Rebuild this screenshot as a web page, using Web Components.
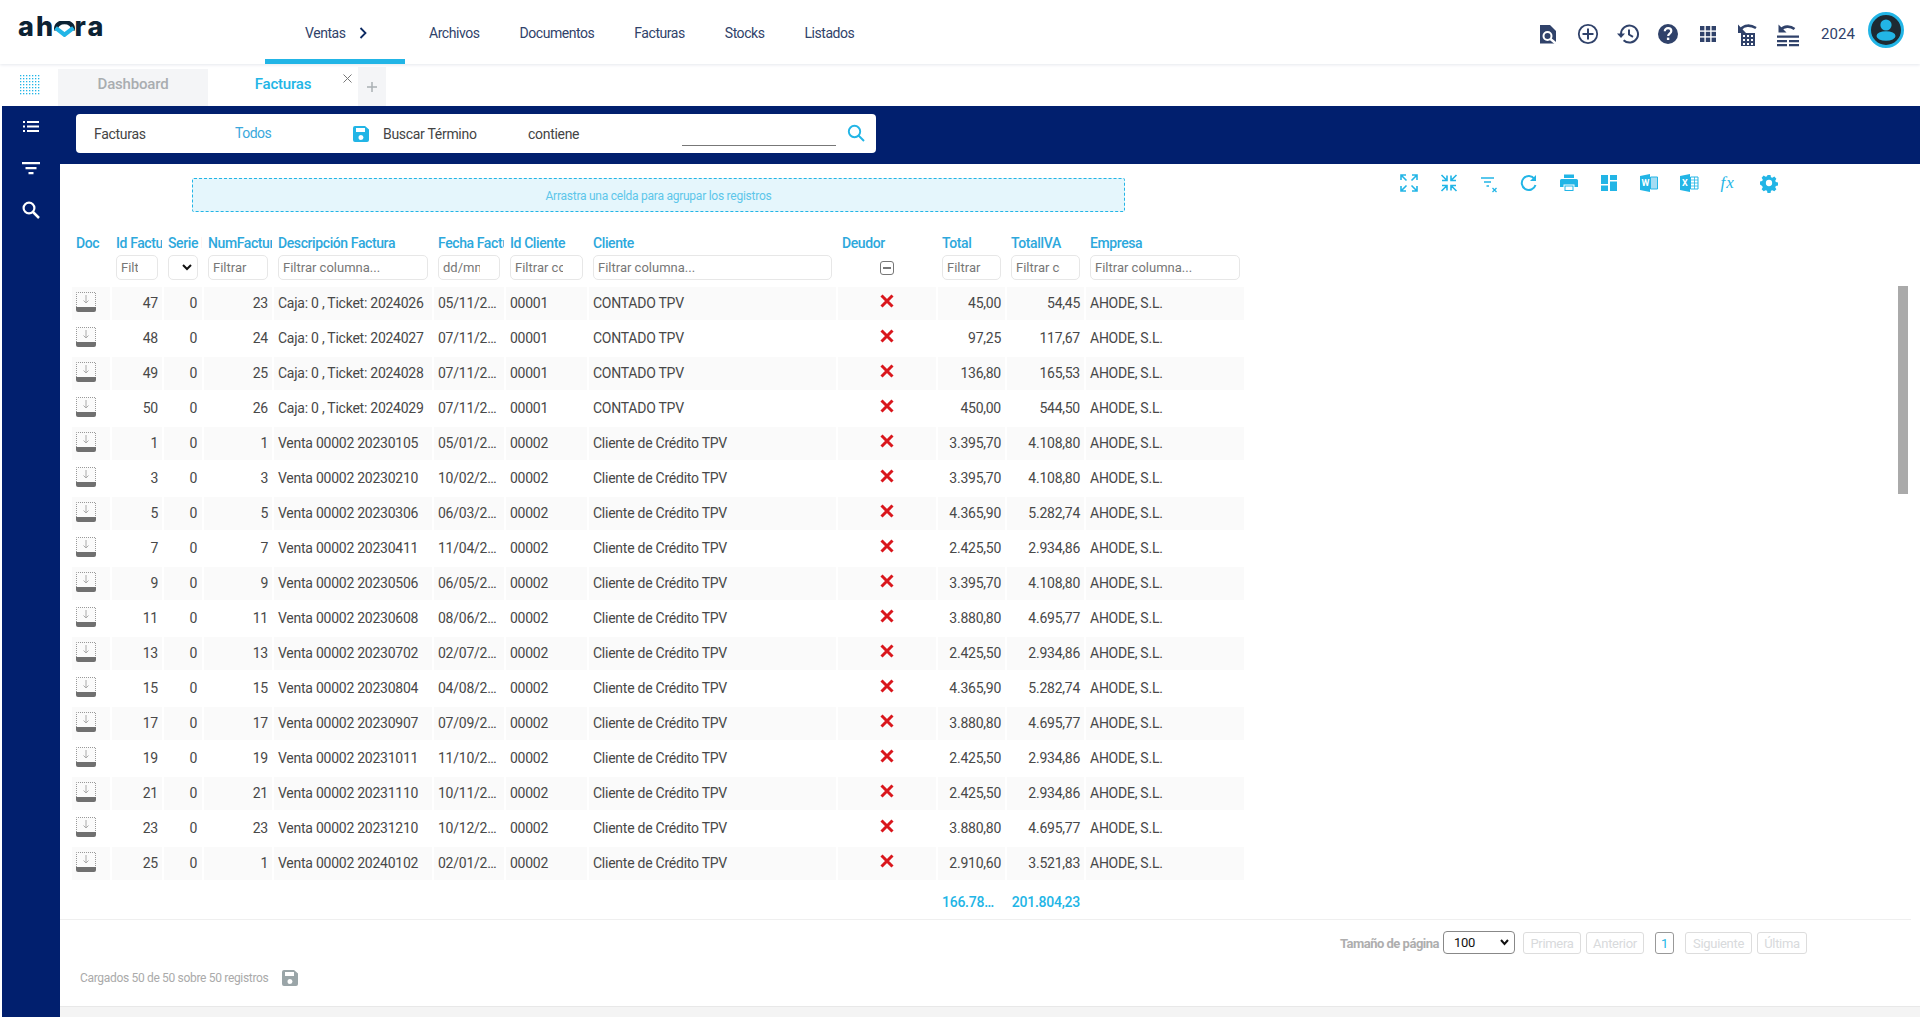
<!DOCTYPE html>
<html lang="es">
<head>
<meta charset="utf-8">
<title>Facturas</title>
<style>
  html, body { margin: 0; height: 100%; background: #fff; overflow: hidden; }
  body { font-family: Roboto, "Liberation Sans", sans-serif; font-size: 14px; color: #444; }
  #app { display: flex; flex-direction: column; height: 1017px; }
</style>
</head>
<body>
<div id="app">
  <top-bar></top-bar>
  <tab-bar></tab-bar>
  <main-area></main-area>
</div>

<script>
const FONT = 'Roboto, "Liberation Sans", sans-serif';
const NAVY = "#011f6e";
const CYAN = "#22b5e6";
const SLATE = "#30426a";

class TopBar extends HTMLElement {
  constructor() {
    super();
    this.attachShadow({ mode: "open" });
    this.shadowRoot.innerHTML = `
      <style>
        :host { display: flex; height: 64px; align-items: stretch; background: #fff; box-shadow: 0 1px 3px #e6e8ee; position: relative; z-index: 2; font-family: ${FONT}; }
        .logo { width: 265px; padding: 11px 0 0 18px; box-sizing: border-box; font: 800 27px/31px Inter, sans-serif; color: #0c2233; letter-spacing: 2.2px; }
        .o { position: relative; display: inline-block; color: transparent; }
        .o svg { position: absolute; left: -1px; top: 10px; width: 21px; height: 16px; }
        nav { display: flex; font-size: 14px; color: ${SLATE}; letter-spacing: -.45px; }
        nav a { display: flex; align-items: center; padding-top: 2px; margin-right: 40px; }
        nav a.on { width: 140px; box-sizing: border-box; padding-left: 40px; margin-right: 24px; border-bottom: 5px solid ${CYAN}; padding-top: 7px; }
        nav a.on svg { margin-left: 13px; }
        .right { margin-left: auto; display: flex; align-items: center; padding-right: 16px; color: ${SLATE}; }
        .right svg { width: 24px; height: 24px; margin-left: 16px; display: block; margin-top: 3px; }
        .right svg:first-child { margin-left: 0; }
        .yr { font-size: 15px; margin-left: 21px; margin-top: 3px; letter-spacing: .1px; }
        .right svg.av { width: 36px; height: 36px; margin-top: -4px; margin-left: 13px; }
      </style>
      <div class="logo">ah<span class="o">o<svg viewBox="0 0 20 15"><path d="M2 9V7a8 6 0 0 1 16 0v2" fill="none" stroke="#0c2233" stroke-width="4"/><path d="M1.500 6.500L10 13l8.500-6.500" fill="none" stroke="#22b5e6" stroke-width="4"/></svg></span>ra</div>
      <nav>
        <a class="on">Ventas <svg width="8" height="12" viewBox="0 0 8 12"><path d="M1.500 1l5 5-5 5" fill="none" stroke="#0d2a63" stroke-width="1.800"/></svg></a>
        <a>Archivos</a><a>Documentos</a><a>Facturas</a><a>Stocks</a><a>Listados</a>
      </nav>
      <div class="right">
        <svg viewBox="0 0 24 24"><path fill="#30426a" d="M4 3h10l6 6v12.500H4z"/><circle cx="11.500" cy="14" r="4" fill="none" stroke="#fff" stroke-width="2"/><path d="M14.500 17l6 5" stroke="#fff" stroke-width="2.400"/></svg>
        <svg viewBox="0 0 24 24"><circle cx="12" cy="12" r="9.200" fill="none" stroke="#30426a" stroke-width="1.800"/><path d="M12 6.500v11M6.500 12h11" stroke="#30426a" stroke-width="2"/></svg>
        <svg viewBox="0 0 24 24"><path fill="none" stroke="#30426a" stroke-width="2" d="M5 12a8.500 8.500 0 1 1 2.600 6.200"/><path fill="#30426a" d="M1 11.500h8l-4 4.500z"/><path fill="none" stroke="#30426a" stroke-width="2" d="M13 7.500v5l4 2.400"/></svg>
        <svg viewBox="0 0 24 24"><circle cx="12" cy="12" r="10" fill="#30426a"/><path d="M8.800 9.300c0-2 1.400-3.100 3.300-3.100s3.200 1.100 3.200 2.800c0 2.600-3.100 2.600-3.100 5" fill="none" stroke="#fff" stroke-width="2.200"/><rect x="10.900" y="15.600" width="2.400" height="2.400" fill="#fff"/></svg>
        <svg viewBox="0 0 24 24" fill="#30426a"><rect x="4" y="4" width="4.400" height="4.400"/><rect x="9.800" y="4" width="4.400" height="4.400"/><rect x="15.600" y="4" width="4.400" height="4.400"/><rect x="4" y="9.800" width="4.400" height="4.400"/><rect x="9.800" y="9.800" width="4.400" height="4.400"/><rect x="15.600" y="9.800" width="4.400" height="4.400"/><rect x="4" y="15.600" width="4.400" height="4.400"/><rect x="9.800" y="15.600" width="4.400" height="4.400"/><rect x="15.600" y="15.600" width="4.400" height="4.400"/></svg>
        <svg viewBox="0 0 24 24" style="height:28px;width:24px"><path fill="none" stroke="#30426a" stroke-width="2.600" d="M5 7c3-4 9-4.500 15-1"/><path fill="#30426a" d="M2 2.500v8.500h8z"/><path fill="#30426a" fill-rule="evenodd" d="M5 11h14v13H5zM7 13v2h2v-2zM11 13v2h2v-2zM15 13v2h2v-2zM7 17v2h2v-2zM11 17v2h2v-2zM15 17v2h2v-2zM7 21v2h2v-2zM11 21v2h2v-2zM15 21v2h2v-2z"/></svg>
        <svg viewBox="0 0 24 24" style="height:28px;width:24px"><path fill="none" stroke="#30426a" stroke-width="2.600" d="M5 7.500c3-3.500 9-4 13.500-.5"/><path fill="#30426a" d="M2.500 2.500v8h8z"/><path fill="#30426a" d="M1 13.500h22v2.200H1zM1 18h10v2.200H1zM13 18h10v2.200H13zM1 22h10v2.200H1zM13 22h10v2.200H13z"/></svg>
        <span class="yr">2024</span>
        <svg class="av" viewBox="0 0 36 36"><circle cx="18" cy="18" r="16.500" fill="#1d2a33" stroke="#22b5e6" stroke-width="3"/><circle cx="18" cy="13" r="5.600" fill="#22b5e6"/><ellipse cx="18" cy="24" rx="9.500" ry="4.800" fill="#22b5e6"/></svg>
      </div>
    `;
  }
}
customElements.define("top-bar", TopBar);

class TabBar extends HTMLElement {
  constructor() {
    super();
    this.attachShadow({ mode: "open" });
    let dots = "";
    for (let y = 0; y < 7; y++) for (let x = 0; x < 7; x++) dots += `<rect x="${x * 3}" y="${y * 3}" width="1.300" height="1.300"/>`;
    this.shadowRoot.innerHTML = `
      <style>
        :host { display: flex; height: 42px; align-items: flex-end; background: #fff; font-family: ${FONT}; }
        .grid { width: 58px; height: 37px; display: flex; align-items: center; justify-content: center; padding-left: 2px; box-sizing: border-box; position: relative; top: -3px; }
        .tab { width: 150px; height: 37px; display: flex; align-items: center; justify-content: center; font-size: 15px; font-weight: 500; letter-spacing: -.2px; background: #f4f5f7; color: #a9adb0; box-sizing: border-box; padding-bottom: 7px; }
        .tab.on { background: #fff; color: ${CYAN}; position: relative; }
        .x { position: absolute; right: 5px; top: 4px; display: block; }
        .add { width: 28px; height: 39px; background: #f4f5f7; display: flex; align-items: center; justify-content: center; }
      </style>
      <div class="grid"><svg width="20" height="20" viewBox="0 0 20 20" fill="${CYAN}">${dots}</svg></div>
      <div class="tab">Dashboard</div>
      <div class="tab on">Facturas<svg class="x" width="11" height="11" viewBox="0 0 11 11"><path d="M1.500 1.500l8 8M9.500 1.500l-8 8" stroke="#777" stroke-width="1"/></svg></div>
      <div class="add"><svg width="12" height="12" viewBox="0 0 12 12"><path d="M6 1v10M1 6h10" stroke="#a9b0b4" stroke-width="1.500"/></svg></div>
    `;
  }
}
customElements.define("tab-bar", TabBar);

class SearchBar extends HTMLElement {
  constructor() {
    super();
    this.attachShadow({ mode: "open" });
    this.shadowRoot.innerHTML = `
      <style>
        :host { display: flex; width: 800px; height: 39px; margin-left: 16px; background: #fff; border-radius: 4px; align-items: center; font-size: 14px; color: #444; font-family: ${FONT}; letter-spacing: -.3px; position: relative; }
        .a { margin-left: 18px; width: 141px; }
        .b { color: #3aa8dc; width: 118px; margin-top: -1px; letter-spacing: -.5px; }
        svg.s { display: block; width: 16px; height: 16px; margin-right: 14px; }
        .c { width: 145px; }
        .d { width: 154px; }
        .i { width: 154px; height: 20px; border-bottom: 1px solid #777; margin-top: 4px; }
        svg.m { display: block; margin-left: 11px; margin-top: -2px; }
      </style>
      <span class="a">Facturas</span>
      <span class="b">Todos</span>
      <svg class="s" viewBox="0 0 16 16"><path fill="${CYAN}" fill-rule="evenodd" d="M2 0h10l4 3.500V14a2 2 0 0 1-2 2H2a2 2 0 0 1-2-2V2a2 2 0 0 1 2-2zM3 2v4h9V2zM8 9a2.500 2.500 0 1 0 0 5 2.500 2.500 0 0 0 0-5z"/></svg>
      <span class="c">Buscar Término</span>
      <span class="d">contiene</span>
      <div class="i"></div>
      <svg class="m" width="18" height="18" viewBox="0 0 18 18"><circle cx="7.500" cy="7.500" r="5.700" fill="none" stroke="${CYAN}" stroke-width="1.900"/><path d="M11.500 11.500l5.500 5.500" stroke="${CYAN}" stroke-width="2"/></svg>
    `;
  }
}
customElements.define("search-bar", SearchBar);

class TableTools extends HTMLElement {
  constructor() {
    super();
    this.attachShadow({ mode: "open" });
    const c = CYAN;
    const s = `fill="none" stroke="${c}" stroke-width="1.600"`;
    const icons = [
      `<path ${s} d="M2 7V2h5M2 2l5.500 5.500M13 2h5v5M18 2l-5.500 5.500M2 13v5h5M2 18l5.500-5.500M18 13v5h-5M18 18l-5.500-5.500"/>`,
      `<path ${s} d="M3 7.500h5v-5M8 7.500L2.500 2M12 2.500v5h5M12 7.500L17.500 2M3 12.500h5v5M8 12.500L2.500 18M17 12.500h-5v5M12 12.500l5.500 5.500"/>`,
      `<path ${s} d="M2 5h13M5 9h7M7.500 13h2.500"/><path stroke="${c}" stroke-width="1.300" d="M13.500 15l4 4M17.500 15l-4 4"/>`,
      `<path fill="none" stroke="${c}" stroke-width="2" d="M15.500 6a7 7 0 1 0 1 6"/><path fill="${c}" d="M17 2v6h-6z"/>`,
      `<path fill="${c}" d="M5 1.500h10v3.500H5zM2.500 6h15A1.500 1.500 0 0 1 19 7.500V14h-3.500v-2.500h-11V14H1V7.500A1.500 1.500 0 0 1 2.500 6zM5.500 12.500h9V18h-9z"/><rect x="6.500" y="13.500" width="7" height="3.500" fill="#fff"/>`,
      `<path fill="${c}" d="M2 2h7v9H2zM11 2h7v5h-7zM11 8.500h7V18h-7zM2 12.500h7V18H2z"/>`,
      `<path fill="${c}" d="M1 3l10-2v18L1 17z"/><path fill="#a5dcf3" stroke="${c}" d="M11.500 4H18.500v12H11.500z"/><text x="2.500" y="13" font-family="Roboto" font-size="9" font-weight="700" fill="#fff">W</text>`,
      `<path fill="${c}" d="M1 3l10-2v18L1 17z"/><path fill="#fff" stroke="${c}" d="M11.500 4H19v12h-7.500z"/><path stroke="${c}" stroke-width=".8" d="M12 7h7M12 10h7M12 13h7M15.500 4v12"/><text x="3" y="13" font-family="Roboto" font-size="9" font-weight="700" fill="#fff">X</text>`,
      `<text x="1.500" y="14.500" font-family="Liberation Serif" font-style="italic" font-size="17" letter-spacing="1" fill="${c}">fx</text>`,
      `<g transform="translate(1 1) scale(.9)"><path fill="${c}" fill-rule="evenodd" d="M8.300 1h3.400l.5 2.500 1.500.7 2.200-1.300 2.300 2.300-1.300 2.200.7 1.500 2.400.5v3.400l-2.400.5-.7 1.500 1.300 2.200-2.300 2.300-2.200-1.300-1.500.7-.5 2.400H8.300l-.5-2.400-1.500-.7-2.200 1.300-2.300-2.300 1.300-2.200-.7-1.500L0 11.700V8.300l2.400-.5.7-1.500-1.300-2.200 2.300-2.300 2.200 1.300 1.500-.7zM10 6.500a3.500 3.500 0 1 0 0 7 3.500 3.500 0 0 0 0-7z"/></g>`
    ];
    this.shadowRoot.innerHTML = `
      <style>
        :host { display: flex; gap: 20px; }
        svg { display: block; width: 20px; height: 20px; }
      </style>
      ${icons.map(i => `<svg viewBox="0 0 20 20">${i}</svg>`).join("")}
    `;
  }
}
customElements.define("table-tools", TableTools);

const COLS = [38, 50, 38, 68, 158, 70, 81, 247, 98, 67, 77, 158];
const HEAD = ["Doc", "Id Factura", "Serie Factura", "NumFactura", "Descripción Factura", "Fecha Factura", "Id Cliente", "Cliente", "Deudor", "Total", "TotalIVA", "Empresa"];
const CONTADO = "CONTADO TPV", CREDITO = "Cliente de Crédito TPV";
const ROWS = [
  [47, 23, "Caja: 0 , Ticket: 2024026", "05/11/2024", "00001", CONTADO, "45,00", "54,45"],
  [48, 24, "Caja: 0 , Ticket: 2024027", "07/11/2024", "00001", CONTADO, "97,25", "117,67"],
  [49, 25, "Caja: 0 , Ticket: 2024028", "07/11/2024", "00001", CONTADO, "136,80", "165,53"],
  [50, 26, "Caja: 0 , Ticket: 2024029", "07/11/2024", "00001", CONTADO, "450,00", "544,50"],
  [1, 1, "Venta 00002 20230105", "05/01/2023", "00002", CREDITO, "3.395,70", "4.108,80"],
  [3, 3, "Venta 00002 20230210", "10/02/2023", "00002", CREDITO, "3.395,70", "4.108,80"],
  [5, 5, "Venta 00002 20230306", "06/03/2023", "00002", CREDITO, "4.365,90", "5.282,74"],
  [7, 7, "Venta 00002 20230411", "11/04/2023", "00002", CREDITO, "2.425,50", "2.934,86"],
  [9, 9, "Venta 00002 20230506", "06/05/2023", "00002", CREDITO, "3.395,70", "4.108,80"],
  [11, 11, "Venta 00002 20230608", "08/06/2023", "00002", CREDITO, "3.880,80", "4.695,77"],
  [13, 13, "Venta 00002 20230702", "02/07/2023", "00002", CREDITO, "2.425,50", "2.934,86"],
  [15, 15, "Venta 00002 20230804", "04/08/2023", "00002", CREDITO, "4.365,90", "5.282,74"],
  [17, 17, "Venta 00002 20230907", "07/09/2023", "00002", CREDITO, "3.880,80", "4.695,77"],
  [19, 19, "Venta 00002 20231011", "11/10/2023", "00002", CREDITO, "2.425,50", "2.934,86"],
  [21, 21, "Venta 00002 20231110", "10/11/2023", "00002", CREDITO, "2.425,50", "2.934,86"],
  [23, 23, "Venta 00002 20231210", "10/12/2023", "00002", CREDITO, "3.880,80", "4.695,77"],
  [25, 1, "Venta 00002 20240102", "02/01/2024", "00002", CREDITO, "2.910,60", "3.521,83"]
];

class FacturaTable extends HTMLElement {
  constructor() {
    super();
    this.attachShadow({ mode: "open" });
    const filters = [
      "", "Filtrar columna...", "select", "Filtrar columna...", "Filtrar columna...", "dd/mm/aaaa", "Filtrar columna...", "Filtrar columna...", "check", "Filtrar columna...", "Filtrar columna...", "Filtrar columna..."
    ];
    const filterCell = f => {
      if (f === "") return "<td></td>";
      if (f === "select") return `<td><div class="sel"><svg width="10" height="7" viewBox="0 0 10 7"><path d="M1 1l4 4 4-4" fill="none" stroke="#111" stroke-width="2"/></svg></div></td>`;
      if (f === "check") return `<td class="c"><div class="chk"></div></td>`;
      return `<td><div class="flt"><span>${f}</span></div></td>`;
    };
    const doc = `<svg width="20" height="20" viewBox="0 0 20 20"><path d="M.5 15V.5h19V15" fill="#fbfbfb" stroke="#999" stroke-dasharray="1 1"/><path d="M0 15h20v3a2 2 0 0 1-2 2H2a2 2 0 0 1-2-2z" fill="#707070"/><path d="M10 3v8M7.500 8.500L10 11l2.500-2.500" fill="none" stroke="#aaa"/></svg>`;
    const x = `<svg width="14" height="14" viewBox="0 0 14 14"><path d="M1.500 1.500l11 11M12.500 1.500l-11 11" stroke="#d9161c" stroke-width="3"/></svg>`;
    const rows = ROWS.map(r => `
      <tr>
        <td class="bg c">${doc}</td>
        <td class="bg r">${r[0]}</td>
        <td class="bg r pr">0</td>
        <td class="bg r">${r[1]}</td>
        <td class="bg">${r[2]}</td>
        <td class="bg">${r[3]}</td>
        <td class="bg">${r[4]}</td>
        <td class="bg">${r[5]}</td>
        <td class="bg c">${x}</td>
        <td class="bg r">${r[6]}</td>
        <td class="bg r">${r[7]}</td>
        <td class="bg">AHODE, S.L.</td>
      </tr>`).join("");
    this.shadowRoot.innerHTML = `
      <style>
        :host { display: block; width: 1176px; font-family: ${FONT}; font-size: 14px; letter-spacing: -.25px; color: #484848; }
        table { table-layout: fixed; border-collapse: separate; border-spacing: 2px; width: 1176px; }
        td, th { padding: 0 4px; overflow: hidden; white-space: nowrap; text-overflow: ellipsis; }
        th { height: 19px; padding-top: 2px; font-weight: 500; text-align: left; color: #2da8dc; text-overflow: clip; letter-spacing: -.4px; }
        tr.f td { height: 27px; padding-bottom: 4px; text-overflow: clip; }
        td.bg { height: 33px; line-height: 33px; }
        tbody tr:nth-child(odd) td.bg { background: #fafafa; }
        td.r { text-align: right; }
        td.pr { padding-right: 5px; }
        td.c { text-align: center; }
        td svg { display: block; margin: auto; }
        td.c svg { position: relative; top: -3px; }
        td.bg:first-child svg { margin: 0 auto 0 0; top: -2px; }
        .flt, .sel { box-sizing: border-box; height: 25px; border: 1px solid #e7e7e7; border-radius: 5px; padding: 0 4px; color: #777; line-height: 23px; overflow: hidden; white-space: nowrap; background: #fff; letter-spacing: 0; font-size: 13px; }
        .flt span { display: block; overflow: hidden; margin-right: 15px; }
        .sel { display: flex; align-items: center; justify-content: flex-end; padding-right: 5px; }
        .sel svg { margin: 0; }
        .chk { width: 12px; height: 12px; border: 1px solid #777; border-radius: 3px; margin: 0 auto; position: relative; }
        .chk::after { content: ""; position: absolute; left: 2px; right: 2px; top: 5px; height: 2px; background: #777; }
        tr.tot td { height: 31px; padding-top: 4px; color: ${CYAN}; font-weight: 500; }
      </style>
      <table>
        <colgroup>${COLS.map(w => `<col style="width:${w}px">`).join("")}</colgroup>
        <thead>
          <tr>${HEAD.map(h => `<th>${h}</th>`).join("")}</tr>
          <tr class="f">${filters.map(filterCell).join("")}</tr>
        </thead>
        <tbody>${rows}
          <tr class="tot"><td colspan="9"></td><td>166.784,25</td><td class="r">201.804,23</td><td></td></tr>
        </tbody>
      </table>
    `;
  }
}
customElements.define("factura-table", FacturaTable);

class PagerBar extends HTMLElement {
  constructor() {
    super();
    this.attachShadow({ mode: "open" });
    this.shadowRoot.innerHTML = `
      <style>
        :host { display: flex; align-items: flex-start; font-family: ${FONT}; font-size: 13px; letter-spacing: -.3px; justify-content: flex-end; padding: 11px 104px 0 0; border-top: 1px solid #efefef; margin-right: 9px; height: 46px; box-sizing: border-box; }
        .l { font-weight: 700; color: #aeaeae; margin: 5px 4px 0 0; letter-spacing: -.5px; }
        .s { box-sizing: border-box; width: 72px; height: 23px; border: 1px solid #888; border-radius: 4px; display: flex; align-items: center; justify-content: space-between; padding: 0 5px 0 10px; color: #111; margin-right: 8px; }
        .b { box-sizing: border-box; height: 22px; margin-top: 1px; border: 1px solid #ddd; border-radius: 3px; color: #d8dadc; display: flex; align-items: center; justify-content: center; }
        .n { border-color: #999; color: ${CYAN}; }
      </style>
      <span class="l">Tamaño de página</span>
      <div class="s">100<svg width="9" height="7" viewBox="0 0 9 7"><path d="M1 1l3.500 4L8 1" fill="none" stroke="#111" stroke-width="2"/></svg></div>
      <div class="b" style="width:58px;margin-right:5px">Primera</div>
      <div class="b" style="width:58px;margin-right:11px">Anterior</div>
      <div class="b n" style="width:19px;margin-right:11px">1</div>
      <div class="b" style="width:67px;margin-right:5px">Siguiente</div>
      <div class="b" style="width:50px">Última</div>
    `;
  }
}
customElements.define("pager-bar", PagerBar);

class MainArea extends HTMLElement {
  constructor() {
    super();
    this.attachShadow({ mode: "open" });
    this.shadowRoot.innerHTML = `
      <style>
        :host { display: grid; grid-template-columns: 58px 1fr; flex: 1; min-height: 0; margin-left: 2px; font-family: ${FONT}; }
        .side { background: ${NAVY}; display: flex; flex-direction: column; align-items: center; padding-top: 10px; gap: 22px; box-sizing: border-box; }
        .side svg { display: block; width: 20px; height: 20px; }
        .body { display: flex; flex-direction: column; min-width: 0; position: relative; }
        .head { background: ${NAVY}; height: 58px; display: flex; align-items: center; padding-bottom: 3px; box-sizing: border-box; }
        .top { display: flex; height: 58px; align-items: flex-start; box-sizing: border-box; padding-top: 14px; }
        .drop { box-sizing: border-box; width: 933px; height: 34px; margin-left: 132px; background: #e5f6fc; border: 1px dashed ${CYAN}; border-radius: 2px; display: flex; align-items: center; justify-content: center; padding-top: 2px; font-size: 12px; letter-spacing: -.25px; color: #5dc6ea; }
        table-tools { margin-left: 274px; margin-top: -5px; }
        factura-table { margin-left: 10px; margin-top: 7px; }
        .info { display: flex; align-items: center; height: 23px; margin: 1px 0 0 20px; color: #aaa; font-size: 12px; letter-spacing: -.32px; }
        .info svg { margin-left: 14px; }
        .foot { margin-top: auto; height: 11px; background: #f4f4f4; border-top: 1px solid #e8e8e8; box-sizing: border-box; }
        .bar { position: absolute; left: 1838px; top: 180px; width: 10px; height: 208px; background: #aaa; }
      </style>
      <div class="side">
        <svg viewBox="0 0 20 20" fill="#fff"><path d="M2 5h2v2H2zM6 5h12v2H6zM2 9.500h2v2H2zM6 9.500h12v2H6zM2 14h2v2H2zM6 14h12v2H6z"/></svg>
        <svg viewBox="0 0 20 20" fill="#fff"><path d="M1 4h18v2.200H1zM4.500 9h11v2.200h-11zM7.500 14h5v2.200h-5z"/></svg>
        <svg viewBox="0 0 20 20"><circle cx="8" cy="8" r="5.400" fill="none" stroke="#fff" stroke-width="2.200"/><path d="M12 12l6 6" stroke="#fff" stroke-width="2.500"/></svg>
      </div>
      <div class="body">
        <div class="head"><search-bar></search-bar></div>
        <div class="top">
          <div class="drop">Arrastra una celda para agrupar los registros</div>
          <table-tools></table-tools>
        </div>
        <factura-table></factura-table>
        <pager-bar></pager-bar>
        <div class="info">Cargados 50 de 50 sobre 50 registros
          <svg width="16" height="16" viewBox="0 0 16 16"><path fill="#9aa5a8" fill-rule="evenodd" d="M2 0h10l4 3.500V14a2 2 0 0 1-2 2H2a2 2 0 0 1-2-2V2a2 2 0 0 1 2-2zM3 2v4h9V2zM8 9a2.500 2.500 0 1 0 0 5 2.500 2.500 0 0 0 0-5z"/></svg>
        </div>
        <div class="foot"></div>
        <div class="bar"></div>
      </div>
    `;
  }
}
customElements.define("main-area", MainArea);
</script>
</body>
</html>
